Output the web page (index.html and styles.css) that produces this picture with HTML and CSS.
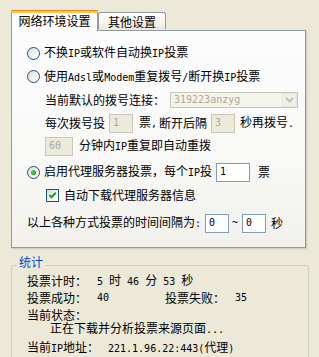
FILE: index.html
```html
<!DOCTYPE html>
<html>
<head>
<meta charset="utf-8">
<link rel="stylesheet" href="styles.css">
</head>
<body>
<div class="tabs">
  <div class="tab active">网络环境设置</div>
  <div class="tab">其他设置</div>
</div>
<div class="panel">
  <div class="row r1"><span class="radio"></span><span class="lbl">不换<span class="en">IP</span>或软件自动换<span class="en">IP</span>投票</span></div>
  <div class="row r2"><span class="radio"></span><span class="lbl">使用<span class="en">Adsl</span>或<span class="en">Modem</span>重复拨号<span class="en">/</span>断开换<span class="en">IP</span>投票</span></div>
  <div class="row r3 ind"><span>当前默认的拨号连接：</span>
    <div class="combo"><span class="en combo-text">319223anzyg</span><span class="combo-btn"><svg width="9" height="6" viewBox="0 0 9 6"><path d="M1 1 L4.5 4.5 L8 1" fill="none" stroke="#C1C0B4" stroke-width="2"/></svg></span></div>
  </div>
  <div class="row r4 ind"><span>每次拨号投</span><span class="box dis w24 gap4"><span class="en">1</span></span><span class="ml6">票<span class="en">,</span></span><span class="ml2">断开后隔</span><span class="box dis w24 gap4"><span class="en">3</span></span><span class="ml5">秒再拨号<span class="en">.</span></span></div>
  <div class="row r5 ind"><span class="box dis w28"><span class="en">60</span></span><span class="ml6">分钟内<span class="en">IP</span>重复即自动重拨</span></div>
  <div class="row r6"><span class="radio on"></span><span class="lbl">启用代理服务器投票，每个<span class="en">IP</span>投</span><span class="box w34 gap4"><span class="en">1</span></span><span class="ml8">票</span></div>
  <div class="row r7 indc"><span class="check"><svg width="11" height="11" viewBox="0 0 11 11"><path d="M2.5 5 L4.5 7.2 L8.8 2.8" fill="none" stroke="#21A121" stroke-width="2"/></svg></span><span class="ml5">自动下载代理服务器信息</span></div>
  <div class="row r8"><span>以上各种方式投票的时间间隔为<span class="en">:</span></span><span class="box w24 gap4"><span class="en">0</span></span><span class="tilde en">~</span><span class="box w24"><span class="en">0</span></span><span class="ml5">秒</span></div>
</div>
<div class="stats">
  <div class="legend">统计</div>
  <div class="srow s1"><span class="k">投票计时：</span><span class="v en">5 <span class="cj">时</span> 46 <span class="cj">分</span> 53 <span class="cj">秒</span></span></div>
  <div class="srow s2"><span class="k">投票成功：</span><span class="v en w68">40</span><span class="k">投票失败：</span><span class="v en">35</span></div>
  <div class="srow s3"><span class="k">当前状态：</span></div>
  <div class="srow s4"><span class="status">正在下载并分析投票来源页面<span class="en">...</span></span></div>
  <div class="srow s5"><span class="k2">当前<span class="en">IP</span>地址：</span><span class="en ip">221.1.96.22:443(<span class="cj">代理</span>)</span></div>
</div>
</body>
</html>
```

FILE: styles.css
```css
html, body {
  margin: 0;
  padding: 0;
}
body {
  background: #ECE9D8;
  font-family: "Noto Sans CJK SC", "Noto Sans", sans-serif;
  font-size: 12px;
  color: #000;
  width: 319px;
  height: 357px;
  overflow: hidden;
}
.en {
  font-family: "DejaVu Sans Mono", "Liberation Mono", monospace;
  font-size: 10px;
}
.cj {
  font-family: "Noto Sans CJK SC", sans-serif;
  font-size: 12px;
}
.tabs {
  display: flex;
  align-items: flex-end;
  padding: 9px 0 0 11px;
  height: 21px;
  box-sizing: content-box;
  position: relative;
  z-index: 2;
}
.tab {
  box-sizing: border-box;
  height: 17px;
  width: 68px;
  border: 1px solid #919B9C;
  border-bottom: none;
  border-radius: 3px 3px 0 0;
  background: linear-gradient(#FFFFFF, #F3F2EC 70%, #E9E7DE);
  display: flex;
  align-items: center;
  justify-content: center;
  line-height: 14px;
  margin-bottom: 1px;
  padding-top: 1px;
}
.tab.active {
  width: 87px;
  height: 21px;
  margin-bottom: -1px;
  background: #FCFCFE;
  border-top: 3px solid #FFC83C;
  padding-top: 0;
  padding-bottom: 2px;
  position: relative;
}
.tab.active::before {
  content: "";
  position: absolute;
  left: -1px;
  right: -1px;
  top: -3px;
  height: 1px;
  background: #E68B2C;
  border-radius: 3px 3px 0 0;
}
.panel {
  box-sizing: border-box;
  margin: 0 13px 0 11px;
  height: 218px;
  border: 1px solid #919B9C;
  border-right: 1px solid #8E9AA0;
  box-shadow: 1px 1px 0 #D0CEBF, 2px 2px 0 #E3E0D0;
  background: linear-gradient(#FCFCFE, #F8F8F6 60%, #F2F1EB);
  padding: 10px 0 0 15px;
  position: relative;
  z-index: 1;
}
.row {
  display: flex;
  align-items: center;
  white-space: nowrap;
  line-height: 16px;
}
.r1 { height: 24px; }
.r2 { height: 23px; }
.r3 { height: 23px; }
.r4 { height: 24px; }
.r5 { height: 22px; }
.r6 { height: 30px; }
.r7 { height: 16px; }
.r8 { height: 40px; }
.ind { padding-left: 18px; }
.indc { padding-left: 19px; }
.lbl { margin-left: 4px; }
.radio {
  flex: none;
  width: 13px;
  height: 13px;
  box-sizing: border-box;
  border-radius: 50%;
  border: 1px solid #1C5180;
  background: linear-gradient(135deg, #DCDCD5, #F4F4F0 60%, #FFFFFF);
  position: relative;
}
.radio.on::after {
  content: "";
  position: absolute;
  left: 3px;
  top: 3px;
  width: 5px;
  height: 5px;
  border-radius: 50%;
  background: radial-gradient(circle at 40% 40%, #5ED85E, #21A121 60%, #1A8A1A);
}
.check {
  flex: none;
  width: 13px;
  height: 13px;
  box-sizing: border-box;
  border: 1px solid #1C5180;
  background: linear-gradient(135deg, #DCDCD5, #F4F4F0 60%, #FFFFFF);
  display: flex;
  align-items: center;
  justify-content: center;
}
.check svg { display: block; }
.combo {
  margin-left: 5px;
  width: 128px;
  height: 16px;
  box-sizing: border-box;
  border: 1px solid #C9C7BA;
  background: #F5F4EA;
  display: flex;
  align-items: center;
  justify-content: space-between;
}
.combo-text {
  color: #ACA899;
  padding-left: 3px;
}
.combo-btn {
  width: 15px;
  height: 14px;
  box-sizing: border-box;
  border: 1px solid #E5E4DA;
  background: #F1F0E8;
  display: flex;
  align-items: center;
  justify-content: center;
}
.combo-btn svg { display: block; }
.box {
  flex: none;
  height: 19px;
  box-sizing: border-box;
  border: 1px solid #7F9DB9;
  background: #FFFFFF;
  display: flex;
  align-items: center;
  padding-left: 3px;
}
.box.dis {
  border-color: #C9C7BA;
  background: #EBEADB;
  color: #ACA899;
}
.w24 { width: 24px; }
.w28 { width: 28px; }
.w34 { width: 34px; }
.gap4 { margin-left: 4px; }
.ml2 { margin-left: 2px; }
.ml5 { margin-left: 5px; }
.ml6 { margin-left: 6px; }
.ml8 { margin-left: 8px; }
.tilde {
  margin: 0 4px 0 3px;
}
.stats {
  margin: 17px 10px 0 11px;
  padding: 6px 0 0 15px;
  border: 1px solid #D0D0BF;
  border-radius: 3px;
  height: 110px;
  box-sizing: border-box;
  position: relative;
}
.legend {
  position: absolute;
  left: 5px;
  top: -11px;
  background: #ECE9D8;
  color: #0046D5;
  padding: 0 2px;
  line-height: 14px;
}
.srow {
  display: flex;
  align-items: center;
  white-space: nowrap;
  line-height: 11px;
}
.s1 { height: 17px; }
.s2 { height: 17px; }
.s3 { height: 17px; }
.s4 { height: 11px; }
.s5 { height: 27px; }
.k { width: 70px; flex: none; }
.k2 { width: 81px; flex: none; }
.v { white-space: pre; }
.w68 { width: 68px; flex: none; }
.status { display: block; flex: none; padding-left: 23px; white-space: pre; }
.ip { white-space: pre; }
```
